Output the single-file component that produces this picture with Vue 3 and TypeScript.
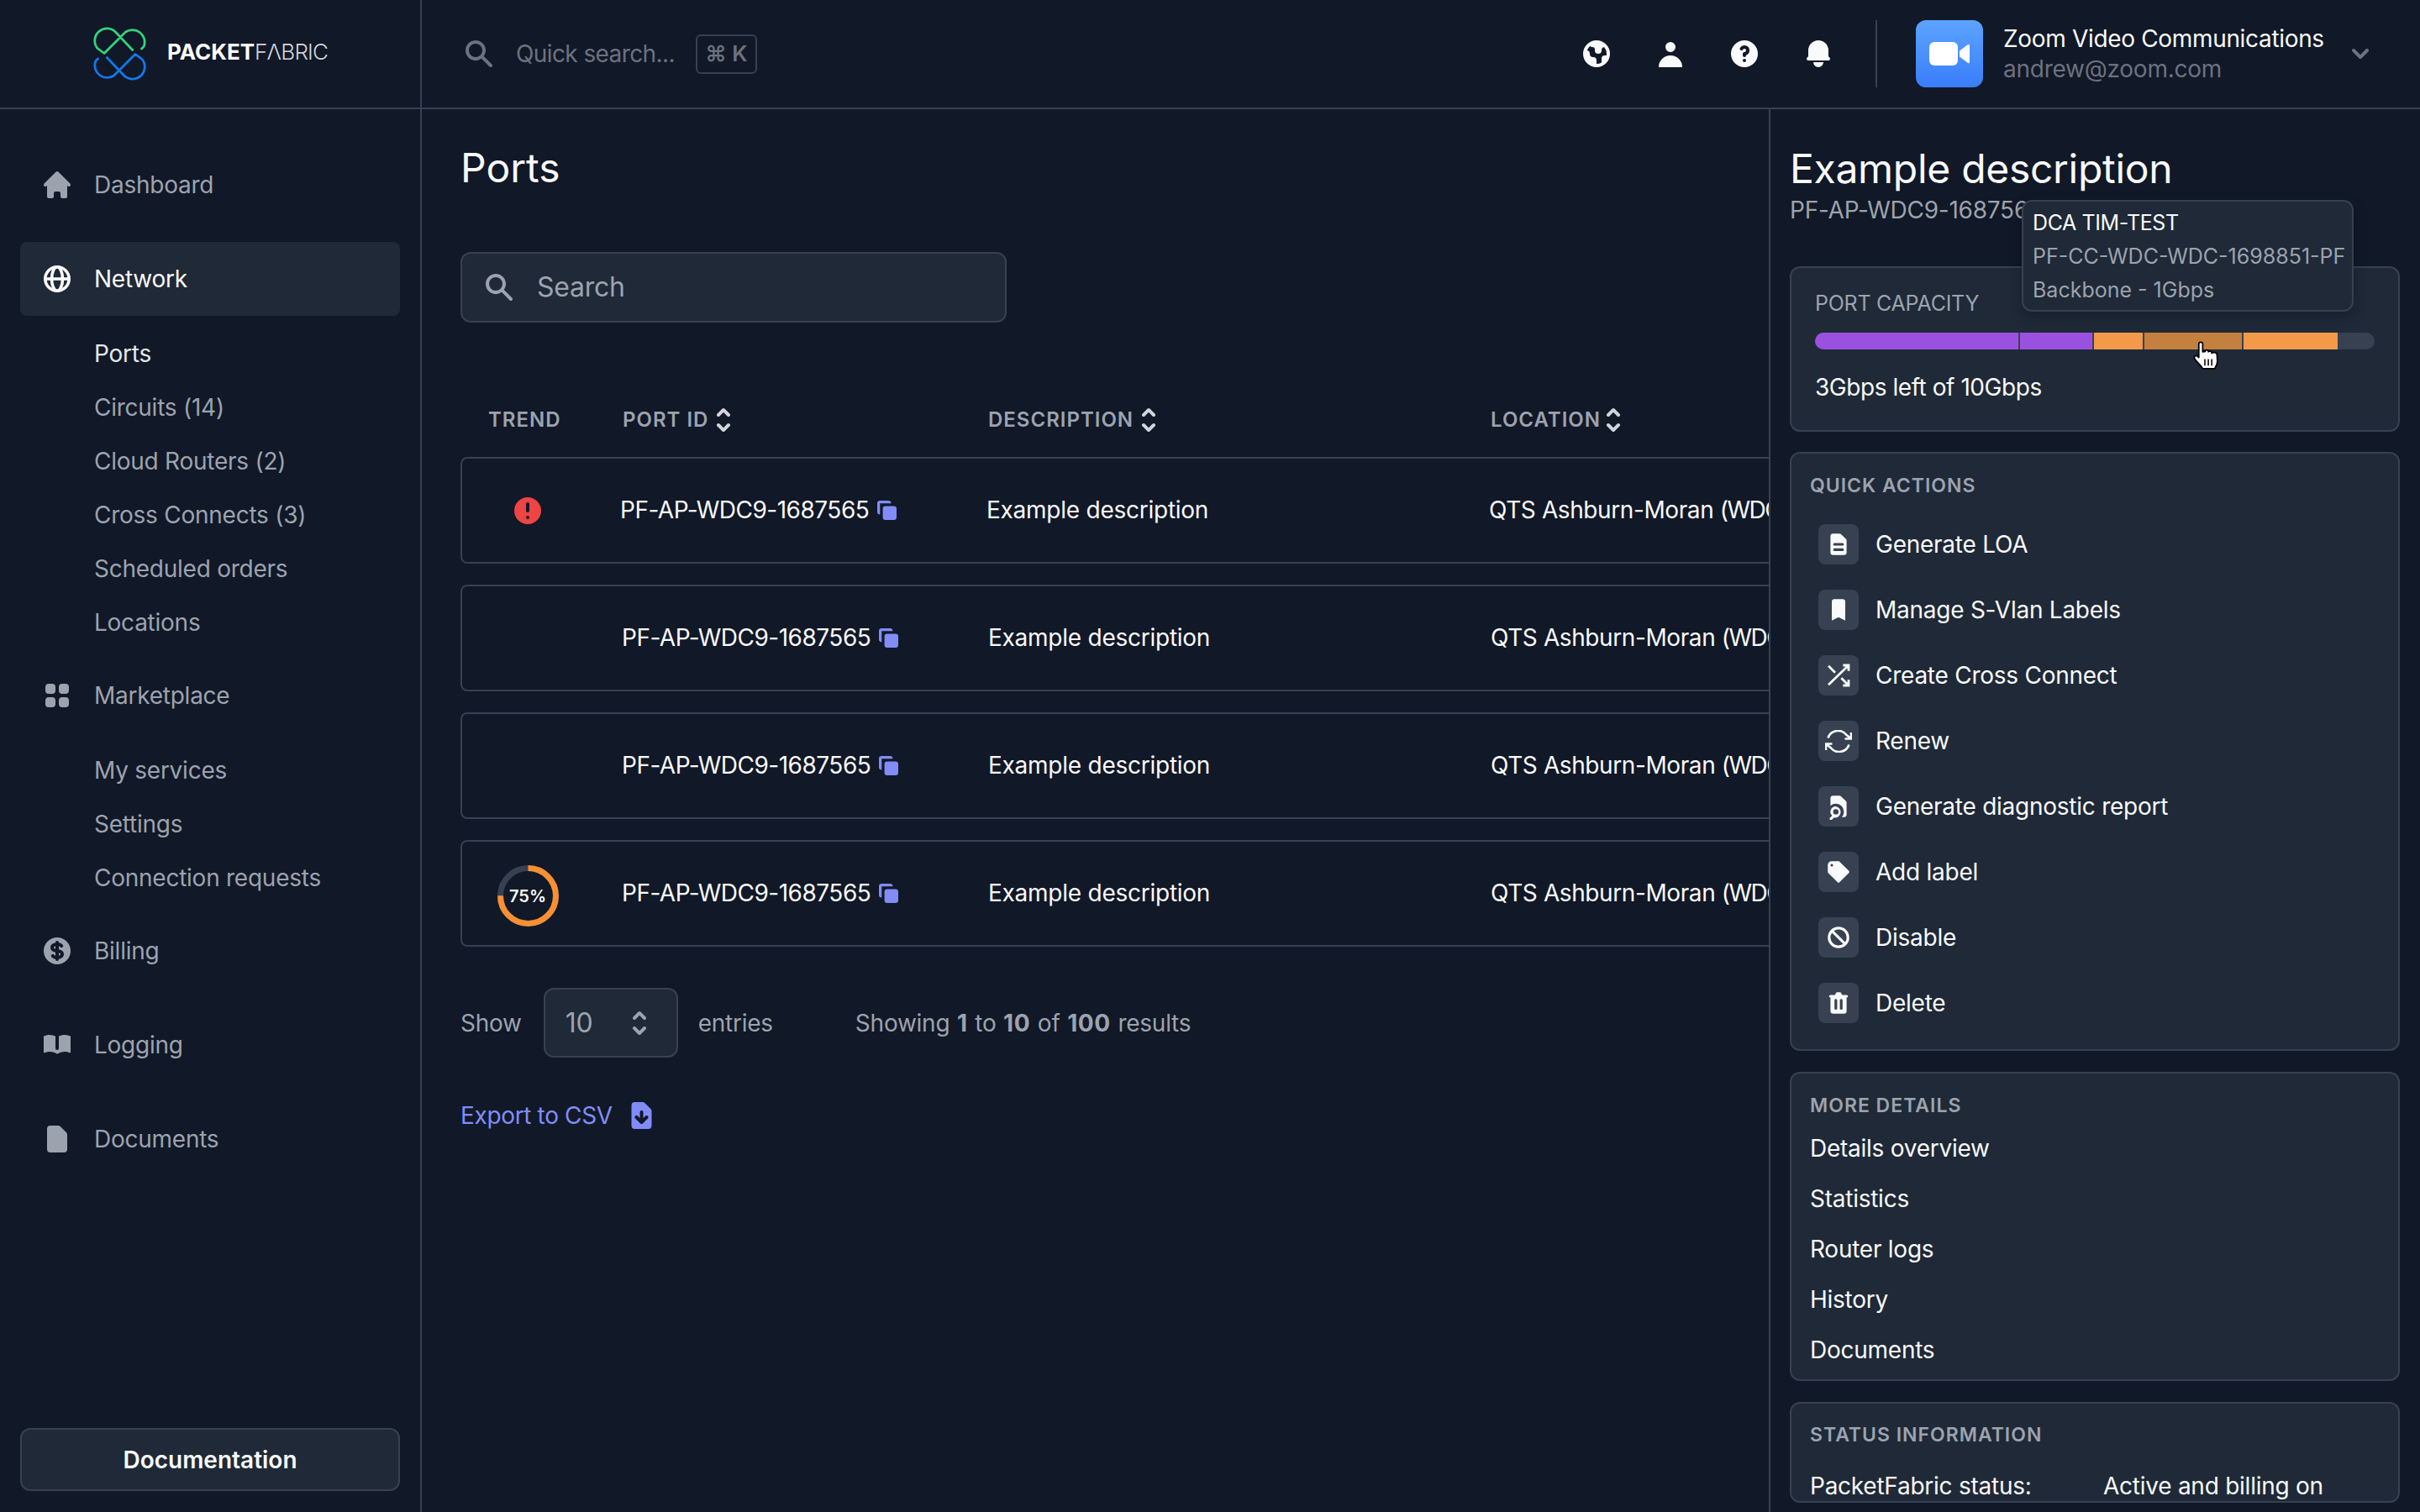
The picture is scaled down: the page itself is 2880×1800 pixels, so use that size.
<script setup lang="ts">
const I: Record<string, string> = {
  home: 'M10.707 2.293a1 1 0 00-1.414 0l-7 7a1 1 0 001.414 1.414L4 10.414V17a1 1 0 001 1h2a1 1 0 001-1v-2a1 1 0 011-1h2a1 1 0 011 1v2a1 1 0 001 1h2a1 1 0 001-1v-6.586l.293.293a1 1 0 001.414-1.414l-7-7z',
  search: 'M8 4a4 4 0 100 8 4 4 0 000-8zM2 8a6 6 0 1110.89 3.476l4.817 4.817a1 1 0 01-1.414 1.414l-4.816-4.816A6 6 0 012 8z',
  grid: 'M5 3a2 2 0 00-2 2v2a2 2 0 002 2h2a2 2 0 002-2V5a2 2 0 00-2-2H5zM5 11a2 2 0 00-2 2v2a2 2 0 002 2h2a2 2 0 002-2v-2a2 2 0 00-2-2H5zM11 5a2 2 0 012-2h2a2 2 0 012 2v2a2 2 0 01-2 2h-2a2 2 0 01-2-2V5zM11 13a2 2 0 012-2h2a2 2 0 012 2v2a2 2 0 01-2 2h-2a2 2 0 01-2-2v-2z',
  book: 'M9 4.804A7.968 7.968 0 005.5 4c-1.255 0-2.443.29-3.5.804v10A7.969 7.969 0 015.5 14c1.669 0 3.218.51 4.5 1.385A7.962 7.962 0 0114.5 14c1.255 0 2.443.29 3.5.804v-10A7.968 7.968 0 0014.5 4c-1.255 0-2.443.29-3.5.804V12a1 1 0 11-2 0V4.804z',
  doc: 'M4 4a2 2 0 012-2h4.586A2 2 0 0112 2.586L15.414 6A2 2 0 0116 7.414V16a2 2 0 01-2 2H6a2 2 0 01-2-2V4z',
  docText: 'M4 4a2 2 0 012-2h4.586A2 2 0 0112 2.586L15.414 6A2 2 0 0116 7.414V16a2 2 0 01-2 2H6a2 2 0 01-2-2V4zm2 6a1 1 0 011-1h6a1 1 0 110 2H7a1 1 0 01-1-1zm1 3a1 1 0 100 2h6a1 1 0 100-2H7z',
  dollar: 'M8.433 7.418c.155-.103.346-.196.567-.267v1.698a2.305 2.305 0 01-.567-.267C8.07 8.34 8 8.114 8 8c0-.114.07-.34.433-.582zM11 12.849v-1.698c.22.071.412.164.567.267.364.243.433.468.433.582 0 .114-.07.34-.433.582a2.305 2.305 0 01-.567.267zM10 18a8 8 0 100-16 8 8 0 000 16zm1-13a1 1 0 10-2 0v.092a4.535 4.535 0 00-1.676.662C6.602 6.234 6 7.009 6 8c0 .99.602 1.765 1.324 2.246.48.32 1.054.545 1.676.662v1.941c-.391-.127-.68-.317-.843-.504a1 1 0 10-1.51 1.31c.562.649 1.413 1.076 2.353 1.253V15a1 1 0 102 0v-.092a4.535 4.535 0 001.676-.662C13.398 13.766 14 12.991 14 12c0-.99-.602-1.765-1.324-2.246A4.535 4.535 0 0011 9.092V7.151c.391.127.68.317.843.504a1 1 0 101.511-1.31c-.563-.649-1.413-1.076-2.354-1.253V5z',
  help: 'M18 10a8 8 0 11-16 0 8 8 0 0116 0zm-8-3a1 1 0 00-.867.5 1 1 0 11-1.731-1A3 3 0 0113 8a3.001 3.001 0 01-2 2.83V11a1 1 0 11-2 0v-1a1 1 0 011-1 1 1 0 100-2zm0 8a1 1 0 100-2 1 1 0 000 2z',
  user: 'M10 9a3 3 0 100-6 3 3 0 000 6zm-7 9a7 7 0 1114 0H3z',
  bell: 'M10 2a6 6 0 00-6 6v3.586l-.707.707A1 1 0 004 14h12a1 1 0 00.707-1.707L16 11.586V8a6 6 0 00-6-6zM10 18a3 3 0 01-3-3h6a3 3 0 01-3 3z',
  globe: 'M10 18a8 8 0 100-16 8 8 0 000 16zM4.332 8.027a6.012 6.012 0 011.912-2.706C6.512 5.73 6.974 6 7.5 6A1.5 1.5 0 019 7.5V8a2 2 0 004 0 2 2 0 011.523-1.943A5.977 5.977 0 0116 10c0 .34-.028.675-.083 1H15a2 2 0 00-2 2v2.197A5.973 5.973 0 0110 16v-2a2 2 0 00-2-2 2 2 0 01-2-2 2 2 0 00-1.668-1.973z',
  alert: 'M18 10a8 8 0 11-16 0 8 8 0 0116 0zm-7 4a1 1 0 11-2 0 1 1 0 012 0zm-1-9a1 1 0 00-1 1v4a1 1 0 102 0V6a1 1 0 00-1-1z',
  chevron: 'M5.293 7.293a1 1 0 011.414 0L10 10.586l3.293-3.293a1 1 0 111.414 1.414l-4 4a1 1 0 01-1.414 0l-4-4a1 1 0 010-1.414z',
  selector: 'M10 3a1 1 0 01.707.293l3 3a1 1 0 01-1.414 1.414L10 5.414 7.707 7.707a1 1 0 01-1.414-1.414l3-3A1 1 0 0110 3zm-3.707 9.293a1 1 0 011.414 0L10 14.586l2.293-2.293a1 1 0 011.414 1.414l-3 3a1 1 0 01-1.414 0l-3-3a1 1 0 010-1.414z',
  bookmark: 'M5 4a2 2 0 012-2h6a2 2 0 012 2v14l-5-2.5L5 18V4z',
  tag: 'M17.707 9.293a1 1 0 010 1.414l-7 7a1 1 0 01-1.414 0l-7-7A.997.997 0 012 10V5a3 3 0 013-3h5c.256 0 .512.098.707.293l7 7zM5 6a1 1 0 100-2 1 1 0 000 2z',
  ban: 'M13.477 14.89A6 6 0 015.11 6.524l8.367 8.368zm1.414-1.414L6.524 5.11a6 6 0 018.367 8.367zM18 10a8 8 0 11-16 0 8 8 0 0116 0z',
  trash: 'M9 2a1 1 0 00-.894.553L7.382 4H4a1 1 0 000 2v10a2 2 0 002 2h8a2 2 0 002-2V6a1 1 0 100-2h-3.382l-.724-1.447A1 1 0 0011 2H9zM7 8a1 1 0 012 0v6a1 1 0 11-2 0V8zm5-1a1 1 0 00-1 1v6a1 1 0 102 0V8a1 1 0 00-1-1z',
  copy: 'M7 9a2 2 0 012-2h6a2 2 0 012 2v6a2 2 0 01-2 2H9a2 2 0 01-2-2V9zM5 3a2 2 0 00-2 2v6a2 2 0 002 2V5h8a2 2 0 00-2-2H5z',
  download: 'M6 2a2 2 0 00-2 2v12a2 2 0 002 2h8a2 2 0 002-2V7.414A2 2 0 0015.414 6L12 2.586A2 2 0 0010.586 2H6zm5 6a1 1 0 10-2 0v3.586l-1.293-1.293a1 1 0 10-1.414 1.414l3 3a1 1 0 001.414 0l3-3a1 1 0 00-1.414-1.414L11 11.586V8z',
  docSearch: 'M4 4a2 2 0 012-2h4.586A2 2 0 0112 2.586L15.414 6A2 2 0 0116 7.414V16a2 2 0 01-2 2h-1.528A6 6 0 004 9.528V4zM8 10a4 4 0 00-2.72 6.93l-1.572 1.573a1 1 0 101.414 1.414l1.573-1.573A4 4 0 108 10zm-2 4a2 2 0 114 0 2 2 0 01-4 0z',
}

interface NavGroup { label: string; icon: string; active?: boolean; subs?: string[] }
const nav: NavGroup[] = [
  { label: 'Dashboard', icon: 'home' },
  { label: 'Network', icon: 'net', active: true, subs: ['Ports', 'Circuits (14)', 'Cloud Routers (2)', 'Cross Connects (3)', 'Scheduled orders', 'Locations'] },
  { label: 'Marketplace', icon: 'grid', subs: ['My services', 'Settings', 'Connection requests'] },
  { label: 'Billing', icon: 'dollar' },
  { label: 'Logging', icon: 'book' },
  { label: 'Documents', icon: 'doc' },
]
const rows = ['alert', '', '', 'ring']
const actions = [
  { label: 'Generate LOA', icon: 'docText' },
  { label: 'Manage S-Vlan Labels', icon: 'bookmark' },
  { label: 'Create Cross Connect', icon: 'shuffle' },
  { label: 'Renew', icon: 'renew' },
  { label: 'Generate diagnostic report', icon: 'docSearch' },
  { label: 'Add label', icon: 'tag' },
  { label: 'Disable', icon: 'ban' },
  { label: 'Delete', icon: 'trash' },
]
const details = ['Details overview', 'Statistics', 'Router logs', 'History', 'Documents']
const segments = [
  { w: 242, c: '#9b51e0' },
  { w: 86, c: '#9b51e0' },
  { w: 58, c: '#f2994a' },
  { w: 116, c: '#c4803f' },
  { w: 112, c: '#f2994a' },
]
</script>

<template>
  <div class="app">
    <header class="topbar">
      <div class="brand">
        <svg class="logo" viewBox="0 0 63 64" fill="none" stroke-width="2.8" stroke-linecap="round" stroke-linejoin="round">
          <path stroke="#34d17f" d="M46.7 27.5 L26.6 6.2 A14.6 14.6 0 0 0 4.4 25 L 13 31.5 L 38.5 6 A14.6 14.6 0 0 1 60.5 22.5 Q59.6 24.6 57.5 26" />
          <path stroke="#1178ec" d="M16.3 36.5 L36.4 57.8 A14.6 14.6 0 0 0 58.6 39 L 50 32.5 L 24.5 58 A14.6 14.6 0 0 1 2.5 41.5 Q3.4 39.4 5.5 38" />
        </svg>
        <span class="wordmark"><b>PACKET</b><span class="fabric">FΛBRIC</span></span>
      </div>
      <div class="topmain">
        <svg class="ic quick-ic" viewBox="0 0 20 20"><path fill-rule="evenodd" :d="I.search" /></svg>
        <span class="quick">Quick search...</span>
        <span class="kbd">⌘ K</span>
        <div class="tools">
          <svg class="tool" viewBox="0 0 20 20"><path fill-rule="evenodd" :d="I.globe" /></svg>
          <svg class="tool" viewBox="0 0 20 20"><path fill-rule="evenodd" :d="I.user" /></svg>
          <svg class="tool" viewBox="0 0 20 20"><path fill-rule="evenodd" :d="I.help" /></svg>
          <svg class="tool" viewBox="0 0 20 20"><path :d="I.bell" /></svg>
        </div>
        <div class="account">
          <div class="zoomlogo">
            <svg viewBox="0 0 48 28" width="48" height="28"><rect x="0" y="0" width="34" height="28" rx="6" fill="#fff" /><path d="M36 10.500 L46 3 Q48 2 48 4.500 V23.500 Q48 26 46 25 L36 17.500 Z" fill="#fff" /></svg>
          </div>
          <div class="who">
            <div class="who-name">Zoom Video Communications</div>
            <div class="who-mail">andrew@zoom.com</div>
          </div>
          <svg class="acc-chev" viewBox="0 0 20 20"><path fill-rule="evenodd" :d="I.chevron" /></svg>
        </div>
      </div>
    </header>

    <div class="body">
      <aside class="sidebar">
        <div v-for="g in nav" :key="g.label" class="group" :class="{ 'has-sub': g.subs }">
          <div class="nav-item" :class="{ active: g.active }">
            <svg v-if="g.icon === 'net'" class="nav-ic net" viewBox="0 0 40 40">
              <circle cx="20" cy="20" r="14.2" />
              <ellipse cx="20" cy="20" rx="6.500" ry="14.200" />
              <path d="M5 20h30" />
            </svg>
            <svg v-else class="nav-ic" viewBox="0 0 20 20"><path fill-rule="evenodd" :d="I[g.icon]" /></svg>
            <span>{{ g.label }}</span>
          </div>
          <div v-if="g.subs" class="subs">
            <div v-for="(s, i) in g.subs" :key="s" class="sub" :class="{ current: g.active && i === 0 }">{{ s }}</div>
          </div>
        </div>
        <button class="docs-btn">Documentation</button>
      </aside>

      <main class="main">
        <div class="content">
          <h1 class="page-title">Ports</h1>
          <div class="searchbox">
            <svg class="ic" viewBox="0 0 20 20"><path fill-rule="evenodd" :d="I.search" /></svg>
            <span>Search</span>
          </div>
          <div class="thead">
            <div class="th c-trend">TREND</div>
            <div class="th c-id">PORT ID <svg class="sort" viewBox="0 0 20 20"><path fill-rule="evenodd" :d="I.selector" /></svg></div>
            <div class="th c-desc">DESCRIPTION <svg class="sort" viewBox="0 0 20 20"><path fill-rule="evenodd" :d="I.selector" /></svg></div>
            <div class="th th-loc">LOCATION <svg class="sort" viewBox="0 0 20 20"><path fill-rule="evenodd" :d="I.selector" /></svg></div>
          </div>
          <div class="rows">
            <div v-for="(r, i) in rows" :key="i" class="row">
              <div class="c-trend trend" :class="{ shifted: r === 'alert' }">
                <svg v-if="r === 'alert'" class="alert" viewBox="2 2 16 16"><path fill-rule="evenodd" fill="#ef4444" :d="I.alert" /></svg>
                <div v-if="r === 'ring'" class="ring">
                  <svg viewBox="0 0 73 73" width="73" height="73" fill="none" stroke-width="7">
                    <circle cx="36.5" cy="36.5" r="33" stroke="#374151" />
                    <circle cx="36.5" cy="36.5" r="33" stroke="#f78f33" stroke-dasharray="155.5 207.4" transform="rotate(-90 36.5 36.5)" />
                  </svg>
                  <span>75%</span>
                </div>
              </div>
              <div class="c-id pid">PF-AP-WDC9-1687565 <svg class="copy" viewBox="3 3 14 14"><path :d="I.copy" /></svg></div>
              <div class="c-desc">Example description</div>
              <div class="loc">QTS Ashburn-Moran <span class="loc-code">(WDC9)</span></div>
            </div>
          </div>
          <div class="pager">
            <span>Show</span>
            <div class="select"><span>10</span><svg viewBox="0 0 20 20"><path fill-rule="evenodd" :d="I.selector" /></svg></div>
            <span>entries</span>
            <span class="showing">Showing <b>1</b> to <b>10</b> of <b>100</b> results</span>
          </div>
          <div class="export">Export to CSV <svg viewBox="4 2 12 16"><path fill-rule="evenodd" :d="I.download" /></svg></div>
        </div>

        <section class="panel">
          <h2 class="panel-title">Example description</h2>
          <div class="panel-sub">PF-AP-WDC9-1687565</div>
          <div class="tooltip">
            <div class="tip-1">DCA TIM-TEST</div>
            <div>PF-CC-WDC-WDC-1698851-PF</div>
            <div>Backbone - 1Gbps</div>
          </div>

          <div class="card capacity">
            <div class="cap-label">PORT CAPACITY</div>
            <div class="bar">
              <i v-for="(s, i) in segments" :key="i" :style="{ width: s.w + 'px', background: s.c }" />
            </div>
            <div class="cap-text">3Gbps left of 10Gbps</div>
            <svg class="cursor" viewBox="-1 -1 30 34">
              <path d="M5.500 2.500C5.500-.5 10-.5 10 2.500V11.500L13 11V10.500C13 9 16.500 9 16.500 10.500V11.500C17 10.500 20.500 10.500 20.500 12.500V13C21.500 11.500 26.500 12 26.500 14.500 L27 22C27 26 25 28 24 31H10C8 27 4 24.500 .8 19.500-.5 17 1.500 15 4 16.500L5.500 18Z" fill="#fff" stroke="#000" stroke-width="1.700" stroke-linejoin="round" />
              <path d="M12.500 20v7.500M16.500 20v7.500M20.500 20v7.500" stroke="#000" stroke-width="1.500" fill="none" />
            </svg>
          </div>

          <div class="card actions">
            <div class="card-head">QUICK ACTIONS</div>
            <div v-for="a in actions" :key="a.label" class="action">
              <span class="act-ic">
                <svg v-if="a.icon === 'shuffle'" class="shuffle" viewBox="0 0 24 24" fill="none" stroke="#f9fafb" stroke-width="2.100"><path d="M16 3h5v5M3 20.500 21 3M21 16v5h-5M14.500 14.500 21 21M3 3.500l6 6" /></svg>
                <svg v-else-if="a.icon === 'renew'" class="renew" viewBox="0 0 32 27" fill="none" stroke="#f9fafb" stroke-width="2.600"><path d="M31 3v7.500h-7.500M1 24v-7.500h7.500M3.500 9.500A12.500 12.500 0 0 1 25 5.500l6 5M1 16.500l6 5A12.500 12.500 0 0 0 28.500 17.500" /></svg>
                <svg v-else class="act-svg" viewBox="0 0 20 20" fill="#f9fafb"><path fill-rule="evenodd" :d="I[a.icon]" /></svg>
              </span>
              <span>{{ a.label }}</span>
            </div>
          </div>

          <div class="card details">
            <div class="card-head">MORE DETAILS</div>
            <div v-for="d in details" :key="d" class="detail">{{ d }}</div>
          </div>

          <div class="card status">
            <div class="card-head">STATUS INFORMATION</div>
            <div class="status-row"><span>PacketFabric status:</span><span>Active and billing on</span></div>
          </div>
        </section>
      </main>
    </div>
  </div>
</template>

<style>
html, body { margin: 0; background: #111827; }
</style>

<style scoped>
* { box-sizing: border-box; }
.app {
  width: 2880px; height: 1800px; overflow: hidden; display: flex; flex-direction: column;
  background: #111827; color: #f9fafb;
  font-family: Inter, "Noto Sans", sans-serif; font-size: 28px; line-height: 36px; letter-spacing: -0.25px;
}
.ic { width: 40px; height: 40px; fill: #9ca3af; flex: none; }

.topbar { height: 130px; flex: none; display: flex; border-bottom: 2px solid #374151; }
.brand { width: 502px; flex: none; border-right: 2px solid #374151; display: flex; align-items: center; padding: 0 0 0 111px; gap: 25px; }
.logo { width: 63px; height: 64px; flex: none; }
.wordmark { font-size: 26px; line-height: 30px; letter-spacing: 0; display: flex; font-weight: 300; color: #d1d5db; margin-top: -4px; }
.wordmark b { font-weight: 700; color: #fff; }
.fabric { letter-spacing: -0.8px; }
.topmain { flex: 1; display: flex; align-items: center; padding-left: 48px; }
.quick-ic { width: 40px; height: 40px; fill: #6b7280; }
.quick { color: #6b7280; margin-left: 24px; white-space: nowrap; letter-spacing: -0.6px; }
.kbd { margin-left: 25px; width: 73px; height: 47px; border: 2px solid #374151; border-radius: 6px; color: #6b7280; font-size: 26px; font-weight: 600; display: flex; align-items: center; justify-content: center; letter-spacing: 0; }
.tools { margin-left: auto; display: flex; gap: 48px; }
.tool { width: 40px; height: 40px; fill: #f9fafb; }
.account { margin-left: 48px; padding-left: 46px; border-left: 2px solid #374151; height: 80px; display: flex; align-items: center; margin-right: 51px; }
.zoomlogo { width: 80px; height: 80px; border-radius: 12px; background: linear-gradient(#5ca4ff, #3a7dfb); display: flex; align-items: center; justify-content: center; flex: none; }
.who { margin-left: 24px; width: 405px; flex: none; white-space: nowrap; }
.who-name { color: #f9fafb; letter-spacing: -0.33px; }
.who-mail { color: #6b7280; }
.acc-chev { width: 40px; height: 40px; fill: #6b7280; flex: none; }

.body { flex: 1; display: flex; min-height: 0; }
.sidebar { width: 502px; flex: none; border-right: 2px solid #374151; padding: 46px 24px 25px; display: flex; flex-direction: column; }
.group { margin-bottom: 24px; }
.group.has-sub { margin-bottom: 12px; }
.nav-item { height: 88px; border-radius: 8px; display: flex; align-items: center; padding-left: 24px; color: #9ca3af; gap: 24px; }
.nav-item.active { background: #1f2937; color: #f9fafb; }
.nav-ic { width: 40px; height: 40px; flex: none; fill: currentColor; }
.nav-ic.net { fill: none; stroke: currentColor; stroke-width: 3.600; }
.subs { padding-top: 12px; }
.sub { height: 64px; padding-left: 88px; padding-top: 1px; display: flex; align-items: center; color: #9ca3af; }
.sub.current { color: #e5e7eb; }
.docs-btn { margin-top: auto; height: 75px; border-radius: 12px; border: 2px solid #374151; background: #1f2937; color: #f9fafb; font: 600 28px Inter, sans-serif; letter-spacing: 0; }

.main { flex: 1; display: flex; min-width: 0; }
.content { flex: 1; min-width: 0; overflow: hidden; padding: 42px 0 0 46px; }
.page-title { margin: 0; font-size: 48px; line-height: 56px; font-weight: 400; letter-spacing: 0; }
.searchbox { margin-top: 72px; width: 650px; height: 84px; border: 2px solid #374151; border-radius: 12px; background: #1f2937; display: flex; align-items: center; padding-left: 24px; gap: 25px; color: #9ca3af; font-size: 32px; }
.thead { margin-top: 96px; height: 40px; display: flex; align-items: center; width: 1900px; padding-left: 33px; }
.th { font-size: 24px; font-weight: 600; letter-spacing: 1px; color: #9ca3af; display: flex; align-items: center; gap: 0; white-space: nowrap; }
.thead .c-trend { width: 160px; flex: none; }
.thead .c-id { width: 435px; flex: none; }
.thead .c-desc { width: 598px; flex: none; }
.sort { width: 40px; height: 40px; fill: #d1d5db; flex: none; margin-left: -2px; }
.th-loc .sort { margin-left: -5px; }
.rows { margin-top: 24px; display: flex; flex-direction: column; gap: 25px; width: 1900px; }
.row { height: 127px; border: 2px solid #374151; border-radius: 8px; padding-bottom: 2px; display: flex; align-items: center; white-space: nowrap; }
.trend { width: 190px; flex: none; display: flex; justify-content: center; padding-right: 34px; }
.trend.shifted { width: 188px; padding-right: 32px; }
.row .c-id { width: 436px; flex: none; }
.row .c-desc { width: 598px; flex: none; }
.loc { letter-spacing: -0.4px; }
.loc-code { letter-spacing: -1.5px; }
.alert { width: 32px; height: 32px; margin-top: 2px; }
.ring { position: relative; width: 73px; height: 73px; margin-top: 8px; }
.ring svg { display: block; }
.ring span { position: absolute; inset: 0; display: flex; align-items: center; justify-content: center; font-size: 20px; font-weight: 600; letter-spacing: 0; }
.pid { display: flex; align-items: center; gap: 10px; letter-spacing: -0.5px; }
.copy { width: 23px; height: 23px; fill: #818cf8; flex: none; margin-top: 2px; }
.pager { margin-top: 49px; display: flex; align-items: center; color: #9ca3af; }
.select { margin-left: 26px; margin-right: 24px; width: 160px; height: 83px; border: 2px solid #374151; border-radius: 12px; background: #1f2937; display: flex; align-items: center; padding-left: 24px; font-size: 32px; }
.select svg { width: 40px; height: 40px; fill: #9ca3af; margin-left: auto; margin-right: 24px; }
.showing { margin-left: 98px; }
.showing b { font-weight: 700; letter-spacing: 0.6px; margin: 0 1px; }
.export { margin-top: 49px; color: #818cf8; display: flex; align-items: center; gap: 22px; height: 40px; letter-spacing: -0.35px; }
.export svg { width: 25px; height: 32px; fill: #818cf8; flex: none; }

.panel { position: relative; width: 775px; flex: none; height: 100%; overflow: hidden; background: #111827; border-left: 2px solid #374151; padding: 43px 24px 0 23px; }
.panel-title { margin: 0; font-size: 48px; line-height: 56px; font-weight: 400; letter-spacing: -0.3px; }
.panel-sub { margin-top: 3px; color: #9ca3af; white-space: nowrap; }
.tooltip { position: absolute; left: 299px; top: 108px; width: 395px; height: 133px; border: 2px solid #374151; border-radius: 12px; background: #1f2937; z-index: 2; padding: 5px 0 0 11px; font-size: 25px; line-height: 40px; letter-spacing: 0; color: #9ca3af; box-shadow: 0 6px 16px rgba(0,0,0,.25); white-space: nowrap; }
.tip-1 { color: #f9fafb; letter-spacing: -0.4px; }
.card { background: #1f2937; border: 2px solid #374151; border-radius: 12px; }
.capacity { position: relative; margin-top: 49px; padding: 26px 28px 33px; }
.cap-label { font-size: 25px; line-height: 32px; color: #9ca3af; }
.bar { margin-top: 19px; height: 20px; border-radius: 10px; background: #374151; overflow: hidden; display: flex; gap: 2px; }
.bar i { display: block; height: 100%; }
.cap-text { margin-top: 27px; letter-spacing: -0.45px; }
.cursor { position: absolute; left: 478px; top: 87px; width: 31px; height: 35px; }
.card-head { font-size: 23px; line-height: 30px; font-weight: 600; letter-spacing: 1px; color: #9ca3af; }
.actions { margin-top: 24px; padding: 23px 22px 16px; }
.actions .card-head { margin-bottom: 16px; }
.action { height: 78px; display: flex; align-items: center; gap: 20px; padding-left: 10px; }
.act-ic { width: 48px; height: 48px; border-radius: 8px; background: #374151; display: flex; align-items: center; justify-content: center; flex: none; }
.act-svg { width: 32px; height: 32px; }
.shuffle { width: 32px; height: 32px; }
.renew { width: 32px; height: 27px; }
.details { margin-top: 25px; padding: 23px 22px 5px; }
.details .card-head { margin-bottom: 6px; }
.detail { height: 60px; display: flex; align-items: center; }
.status { margin-top: 25px; padding: 22px 22px 0; }
.status-row { margin-top: 28px; display: flex; }
.status-row span:first-child { width: 349px; flex: none; }
</style>
